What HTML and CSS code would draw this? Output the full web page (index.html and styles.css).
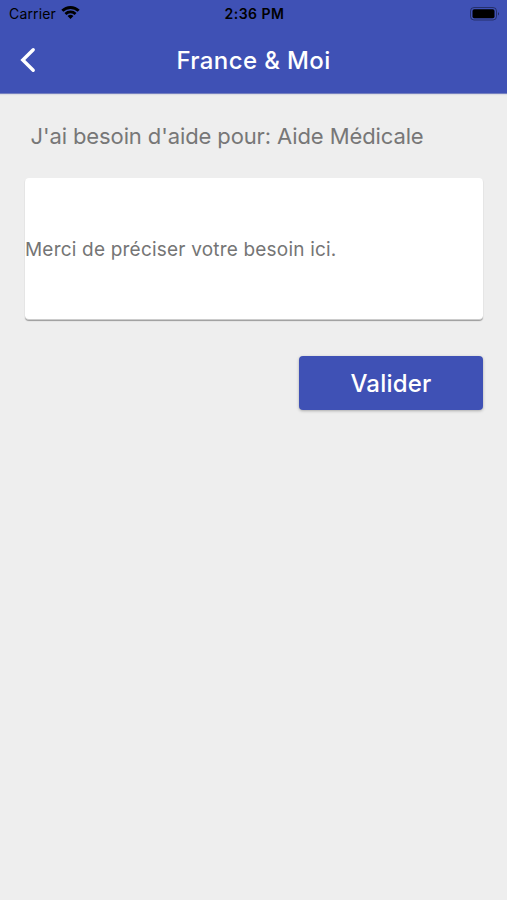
FILE: index.html
```html
<!DOCTYPE html>
<html lang="fr">
<head>
<meta charset="utf-8">
<title>France &amp; Moi</title>
<link rel="stylesheet" href="styles.css">
</head>
<body>
<header class="header">
  <div class="status">
    <div class="carrier"><span class="carrier-name">Carrier</span>
      <svg class="wifi" viewBox="0 0 18 14" width="19" height="15"><path d="M9 13.2 6.2 10.4a4 4 0 0 1 5.6 0ZM5.1 9.3 3.3 7.5a8.1 8.1 0 0 1 11.4 0l-1.8 1.8a5.5 5.5 0 0 0-7.8 0ZM2.2 6.4.3 4.5a12.3 12.3 0 0 1 17.4 0l-1.9 1.9a9.6 9.6 0 0 0-13.6 0Z"/></svg>
    </div>
    <span class="time">2:36 PM</span>
    <svg class="battery" viewBox="0 0 30 14" width="30" height="14"><rect x=".5" y=".5" width="26" height="12.5" rx="3.5" fill="none" stroke="#000" stroke-opacity=".4"/><rect x="2.5" y="2.2" width="22" height="9" rx="1.8"/><path d="M28 5q2 1.8 0 3.6z" fill-opacity=".5"/></svg>
  </div>
  <div class="toolbar">
    <svg class="back" viewBox="0 0 18 26" width="18" height="26"><path d="M14.2 2.8 3.8 13l10.4 10.2"/></svg>
    <h1 class="title">France &amp; Moi</h1>
  </div>
</header>
<main class="content">
  <p class="label">J'ai besoin d'aide pour: Aide Médicale</p>
  <div class="field"><span class="placeholder">Merci de préciser votre besoin ici.</span></div>
  <button class="submit"><span>Valider</span></button>
</main>
</body>
</html>
```
FILE: styles.css
```css
* { box-sizing: border-box; }
body { margin: 0; min-height: 900px; background: #eee; font-family: Inter, "Liberation Sans", sans-serif; }
.header { height: 94px; background: #3f51b5; border-bottom: 1px solid #7580c0; box-shadow: 0 1px 1px #dcdde3; }
.status { height: 27px; display: grid; grid-template-columns: 1fr auto 1fr; align-items: center; padding: 0 7px 0 9px; color: #000; }
.carrier { display: flex; align-items: center; gap: 5px; font-size: 14px; letter-spacing: .15px; }
.wifi { margin-top: -2px; }
.time { font-size: 14px; font-weight: 600; letter-spacing: .5px; }
.battery { justify-self: end; }
.toolbar { height: 66px; display: grid; grid-template-columns: 56px 1fr 56px; align-items: center; }
.back { margin-left: 18.5px; fill: none; stroke: #fff; stroke-width: 3.4; stroke-linecap: round; }
.title { margin: 0; color: #fff; font-size: 24px; font-weight: 500; letter-spacing: .38px; text-align: center; white-space: nowrap; }
.content { padding: 28px 24px 0 25px; display: flex; flex-direction: column; }
.label { margin: 0 0 28px 5.5px; height: 28px; line-height: 28px; font-size: 22px; letter-spacing: -.11px; color: #777; white-space: nowrap; }
.field { height: 142px; padding-top: 1px; display: flex; align-items: center; background: #fff; border-bottom: 1px solid #ccc; border-radius: 4px; box-shadow: 0 1px 1px #999; }
.placeholder { font-size: 19px; letter-spacing: .2px; color: #757575; white-space: nowrap; }
.submit { width: 184px; height: 54px; margin: 36px 0 0; padding: 0; align-self: flex-end; border: 0; border-radius: 4px; background: #3f51b5; color: #fff; font: 500 24px Inter, "Liberation Sans", sans-serif; letter-spacing: .22px; box-shadow: 0 1px 3px #aaa; }
```
